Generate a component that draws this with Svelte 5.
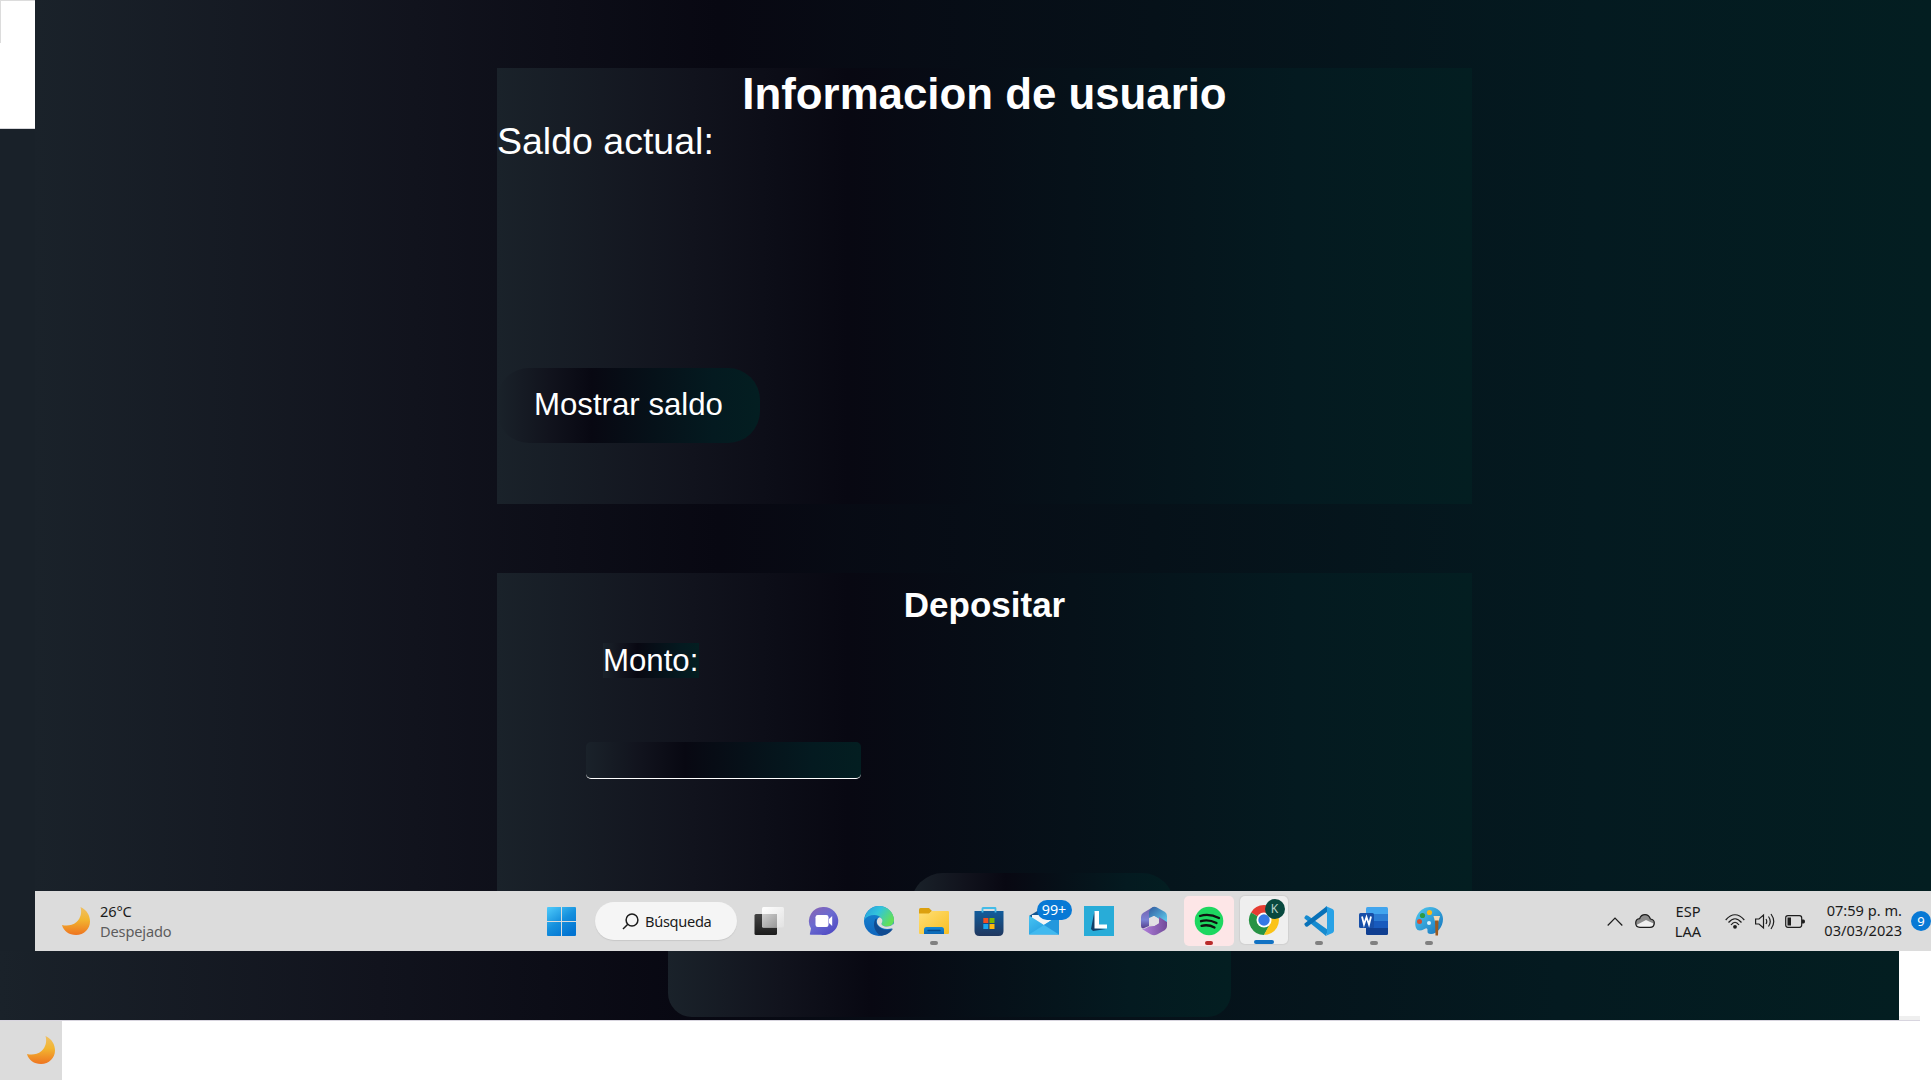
<script>
  const apps = [
    { id: 'tasks' },
    { id: 'chat' },
    { id: 'edge' },
    { id: 'files', dot: 'idle' },
    { id: 'store' },
    { id: 'mail', badge: '99+' },
    { id: 'lens' },
    { id: 'office' },
    { id: 'spotify', dot: 'alert', tile: 'pink' },
    { id: 'chrome', dot: 'active', tile: 'light' },
    { id: 'code', dot: 'idle' },
    { id: 'word', dot: 'idle' },
    { id: 'paint', dot: 'idle' }
  ];
</script>

{#snippet moon()}
  <svg class="moon" viewBox="0 0 28 28">
    <defs>
      <linearGradient id="moonFill" x1="0" y1="0" x2="0" y2="1">
        <stop offset="0" stop-color="#efc064" />
        <stop offset=".45" stop-color="#f2b530" />
        <stop offset="1" stop-color="#ee7420" />
      </linearGradient>
    </defs>
    <path d="M18.5 0C25 3 28 8.500 28 14.500C28 22 22 28 14 28C7 28 1.500 24 0 18C4 19 10 19 14.500 15C19 11 20 5 18.500 0Z" fill="url(#moonFill)" />
  </svg>
{/snippet}

{#snippet icon(id)}
  <svg class="icon" viewBox="0 0 30 30">
    {#if id === 'tasks'}
      <defs>
        <linearGradient id="tkA" x1="0" y1="0" x2="0" y2="1"><stop stop-color="#444" /><stop offset="1" stop-color="#1c1c1c" /></linearGradient>
        <linearGradient id="tkB" x1="0" y1="0" x2="1" y2="1"><stop stop-color="#fff" /><stop offset="1" stop-color="#e2e2e2" /></linearGradient>
        <linearGradient id="tkC" x1="0" y1="0" x2="1" y2="1"><stop stop-color="#cfcfcf" /><stop offset="1" stop-color="#999" /></linearGradient>
      </defs>
      <rect x=".5" y="8" width="22.500" height="21" rx="1.500" fill="url(#tkA)" />
      <rect x="8" y="1" width="22" height="20.500" rx="1.500" fill="url(#tkB)" />
      <path d="M8 8h15v13.500H9.500Q8 21.500 8 20z" fill="url(#tkC)" />
    {:else if id === 'chat'}
      <defs>
        <linearGradient id="chA" x1="0" y1="0" x2=".7" y2="1"><stop stop-color="#8b62b0" /><stop offset=".5" stop-color="#6b6bd0" /><stop offset="1" stop-color="#514cc4" /></linearGradient>
      </defs>
      <path d="M15 1a14.300 14 0 1 1-3 27.700H1.500Q.3 28.700 1 27.300L2 22.500A14.200 14.200 0 0 1 15 1Z" fill="url(#chA)" />
      <rect x="6.500" y="9" width="13" height="12" rx="2.200" fill="#fff" />
      <path d="M20 13L23.200 10V20L20 17Z" fill="#fff" />
    {:else if id === 'edge'}
      <defs>
        <linearGradient id="edA" x1="0" y1="0" x2="1" y2=".5"><stop stop-color="#2699dc" /><stop offset=".5" stop-color="#32c4dc" /><stop offset="1" stop-color="#62df5a" /></linearGradient>
        <linearGradient id="edB" x1="0" y1="0" x2="0" y2="1"><stop stop-color="#1688d2" /><stop offset="1" stop-color="#0f65bd" /></linearGradient>
      </defs>
      <circle cx="15" cy="15" r="15" fill="url(#edB)" />
      <path d="M1 11C3 4 8.500 0 15 0C23.500 0 30 6.500 30 14C30 18 27 20.500 23 20.500C19 20.500 16.500 18.500 18 16.500C19 13 16 9 10.500 9C6 9 2.500 10.500 0 14Q0 12.500 1 11Z" fill="url(#edA)" />
      <path d="M11.500 13C8 19 11 27 17 29.800C22 29.500 27 26.500 29 22.500C23 25.500 16 23.500 13.500 19C12 16.500 12 14.500 13 12.500Z" fill="#104b91" />
      <path d="M18 16.500C16.500 18.500 19 20.500 23 20.500C26 20.500 28 19.500 29.500 17.500L31 22L28.500 22.300C23 24 17 23 14 19C11.500 15.500 13.500 11.500 16 11.200C18 12 19 14.500 18 16.500Z" fill="#dcdcdc" />
    {:else if id === 'files'}
      <defs>
        <linearGradient id="fiA" x1="0" y1="0" x2="1" y2="1"><stop stop-color="#ffdf76" /><stop offset="1" stop-color="#f8bf23" /></linearGradient>
        <linearGradient id="fiB" x1="0" y1="0" x2="0" y2="1"><stop stop-color="#1489d4" /><stop offset="1" stop-color="#0c66b4" /></linearGradient>
      </defs>
      <path d="M0 3.500Q0 2 1.500 2H10L13 5L10 8H0Z" fill="#dca00e" />
      <path d="M0 7.500H10L13 5H29Q30 5 30 6V27Q30 28 29 28H1Q0 28 0 27Z" fill="url(#fiA)" />
      <path d="M5 28V23.500Q5 21 7.500 21H22.500Q25 21 25 23.500V28Z" fill="url(#fiB)" />
      <path d="M9 24.500H21" stroke="#064a8a" stroke-width="1.300" stroke-linecap="round" />
    {:else if id === 'store'}
      <defs>
        <linearGradient id="stA" x1="0" y1="0" x2="0" y2="1"><stop stop-color="#125d9c" /><stop offset="1" stop-color="#20375f" /></linearGradient>
      </defs>
      <path d="M.5 5H29.500V25Q29.500 30 24.500 30H5.500Q.5 30 .5 25Z" fill="url(#stA)" />
      <path d="M8.500 6.500V2.500Q8.500 2 9 2H21Q21.500 2 21.500 2.500V6.500" fill="none" stroke="#43bce8" stroke-width="1.800" />
      <path d="M9.300 12h5v5h-5z" fill="#f25022" /><path d="M15.500 12h5v5h-5z" fill="#7fba00" />
      <path d="M9.300 18h5v5h-5z" fill="#19a5ed" /><path d="M15.500 18h5v5h-5z" fill="#ffba10" />
    {:else if id === 'mail'}
      <defs>
        <linearGradient id="maA" x1="0" y1="0" x2="1" y2="1"><stop stop-color="#48c4f3" /><stop offset="1" stop-color="#168fd8" /></linearGradient>
      </defs>
      <path d="M0 10L10 4H30V14H0Z" fill="#135793" />
      <path d="M3 9H28V15L15 22L3 14Z" fill="#f5f5f5" />
      <path d="M0 9.500L15 19L30 9.500V28.500H0Z" fill="url(#maA)" />
      <path d="M0 28.500L30 9.500V28.500Z" fill="#41b9ef" /><path d="M15 19L30 28.500V9.500Z" fill="#2498dd" />
    {:else if id === 'lens'}
      <rect width="30" height="30" fill="#28acd8" />
      <path d="M10.500 5L7 23L9 25L22 23L12 22Z" fill="#103f68" />
      <path d="M10.500 5H15V18.500H23V22.500H10.500Z" fill="#fff" />
    {:else if id === 'office'}
      <defs>
        <linearGradient id="ofA" x1="0" y1="0" x2="0" y2="1"><stop stop-color="#775ea8" /><stop offset=".6" stop-color="#7a83d5" /><stop offset="1" stop-color="#553e8b" /></linearGradient>
        <linearGradient id="ofB" x1="0" y1="0" x2="1" y2="1"><stop stop-color="#315b9f" /><stop offset="1" stop-color="#62d3f2" /></linearGradient>
        <linearGradient id="ofC" x1="0" y1="0" x2="1" y2="0"><stop stop-color="#b280dc" /><stop offset="1" stop-color="#714b99" /></linearGradient>
      </defs>
      <path d="M14 1L4 7Q2 8.500 2 11V20Q2 22 4 22.500L10 20V11L18 5.500V2Q16 .5 14 1Z" fill="url(#ofA)" />
      <path d="M14 1Q16 .5 18 1.500L26 6Q28 7.500 28 10V17L20 13L15 10L10 12V7Q10 3 14 1Z" fill="url(#ofB)" />
      <path d="M20 11L28 16V20Q28 22.500 26 24L18 28.500Q15 30 12 28.500L3 23Q6 23 10 20.500L15 20L20 17Z" fill="url(#ofC)" />
      <path d="M10.500 12.500L15 10L19.500 12.500V17.500L15 20L10.500 17.500Z" fill="#e2e1e4" />
    {:else if id === 'spotify'}
      <circle cx="15" cy="15" r="14.300" fill="#1ed760" />
      <path d="M6 10C12 8 19 9 25 12M7 15.200C12 13.700 17.500 14.500 22.500 17M7.500 19.800C12 18.700 16.500 19.200 20.500 21.500" fill="none" stroke="#101010" stroke-width="2.300" stroke-linecap="round" />
    {:else if id === 'chrome'}
      <path d="M15 15L2 7.500A15 15 0 0 1 28 7.500Z" fill="#e63d32" />
      <path d="M15 15L2 7.500A15 15 0 0 0 15 30L21.500 18.800Z" fill="#279344" />
      <path d="M15 8H28.200A15 15 0 0 1 15 30L21 18.500Z" fill="#fbc317" />
      <circle cx="15" cy="15" r="7.500" fill="#fff" /><circle cx="15" cy="15" r="5.700" fill="#3578e5" />
    {:else if id === 'code'}
      <path d="M1 10.500Q2 8.500 4 9.800L24 24L22 30L.5 12.500Q0 11.500 1 10.500Z" fill="#168bd0" />
      <path d="M1 19.500Q2 21.500 4 20.200L23 6V0L.5 17.500Q0 18.500 1 19.500Z" fill="#0871b8" />
      <path d="M21.500 0L28.500 3Q30 3.700 30 5.500V24.500Q30 26.300 28.500 27L21.500 30Q23 29 23 27V3Q23 1 21.500 0Z" fill="#29a2e6" />
    {:else if id === 'word'}
      <path d="M7 2.500Q7 1 8.500 1H27.500Q29 1 29 2.500V8H7Z" fill="#41a5ee" /><path d="M7 8h22v7H7z" fill="#2b7cd3" />
      <path d="M7 15h22v7H7z" fill="#185abd" /><path d="M7 22H29V27.500Q29 29 27.500 29H8.500Q7 29 7 27.500Z" fill="#103f91" />
      <rect y="7" width="15" height="15" rx="1.500" fill="#174fa8" />
      <path d="M3 10.500L5 18.500L7.500 11L10 18.500L12 10.500" fill="none" stroke="#fff" stroke-width="1.800" />
    {:else if id === 'paint'}
      <defs>
        <linearGradient id="paA" x1="0" y1="0" x2="1" y2="1"><stop stop-color="#52cbf1" /><stop offset="1" stop-color="#1473bd" /></linearGradient>
      </defs>
      <path d="M16 1C24 1 29 7 29 13C29 21 23 28 17 28Q13 28 13.500 25Q14 21 10.500 23Q4 26.500 2 22C-1 12 6 1 16 1Z" fill="url(#paA)" />
      <circle cx="15.500" cy="6.500" r="2.600" fill="#f6b91e" /><circle cx="8.500" cy="9.500" r="2.600" fill="#2d9b45" />
      <circle cx="5.500" cy="15.500" r="2.500" fill="#d35032" /><circle cx="15" cy="17" r="2" fill="#d9f1fb" />
      <path d="M19.500 10H26L24.500 15.500H21Z" fill="#f3d9b5" /><path d="M21 14.500h3.500L24 29.500H21.500z" fill="#9c5a20" />
    {/if}
  </svg>
{/snippet}

<div class="desktop">
  <div class="upper">
    <div class="edge">
      <div class="blank"></div>
    </div>
    <main class="page">
      <section class="card info">
        <h1>Informacion de usuario</h1>
        <p class="balance">Saldo actual:</p>
        <button class="pill">Mostrar saldo</button>
      </section>
      <section class="card deposit">
        <h2>Depositar</h2>
        <label for="amount">Monto:</label>
        <input id="amount" type="text" />
        <div class="pill submit"></div>
      </section>
    </main>
  </div>

  <div class="barrow">
    <div class="gutter"></div>
    <footer class="taskbar">
      <div class="weather">
        {@render moon()}
        <div class="lines"><span>26°C</span><span class="muted">Despejado</span></div>
      </div>
      <svg class="start" viewBox="0 0 29 29">
        <defs>
          <linearGradient id="winFill" gradientUnits="userSpaceOnUse" x1="0" y1="0" x2="20" y2="29"><stop stop-color="#4fcbfb" /><stop offset=".55" stop-color="#1590dd" /><stop offset="1" stop-color="#0274d2" /></linearGradient>
        </defs>
        <path d="M1 0H14V14H0V1Q0 0 1 0ZM15 0H28Q29 0 29 1V14H15ZM0 15H14V29H1Q0 29 0 28ZM15 15H29V28Q29 29 28 29H15Z" fill="url(#winFill)" />
      </svg>
      <div class="search">
        <svg viewBox="0 0 17 17"><circle cx="10" cy="7" r="5.900" /><path d="M5.800 11.200L1 16" /></svg>
        <span>Búsqueda</span>
      </div>
      <nav class="apps">
        {#each apps as app}
          <div class="app">
            <div class="tile {app.tile ?? ''}">
              {@render icon(app.id)}
              {#if app.badge}<span class="badge">{app.badge}</span>{/if}
              {#if app.id === 'chrome'}<span class="profile">K</span>{/if}
              {#if app.dot}<i class="dot {app.dot}"></i>{/if}
            </div>
          </div>
        {/each}
      </nav>
      <div class="tray">
        <svg class="chev" viewBox="0 0 16 9"><path d="M.7 8.500L8 1L15.300 8.500" /></svg>
        <svg class="cloud" viewBox="0 0 20 14">
          <path d="M5 13.300Q.7 13.300 .7 9Q.7 5 4.600 4.700Q6 .7 10 .7Q14 .7 15.400 5Q19.300 5.500 19.300 9Q19.300 13.300 15 13.300Z" fill="#8c8c8c" stroke="none" />
          <path d="M1.500 11L11 6L18.500 9.500Q18.500 13 15 13H5Q2.500 13 1.500 11Z" fill="#f0f0f0" stroke="none" />
          <path d="M5 13.300Q.7 13.300 .7 9Q.7 5 4.600 4.700Q6 .7 10 .7Q14 .7 15.400 5Q19.300 5.500 19.300 9Q19.300 13.300 15 13.300Z" />
        </svg>
        <div class="lang"><span>ESP</span><span>LAA</span></div>
        <svg class="wifi" viewBox="0 0 20 15">
          <path d="M.7 6Q10-4.500 19.300 6M3.500 8.500Q10 1 16.500 8.500M6 11Q10 5.500 14 11" /><circle cx="10" cy="12.800" r="1.900" fill="#1d1d1d" stroke="none" />
        </svg>
        <svg class="sound" viewBox="0 0 20 17">
          <path d="M.6 6H4L8.500 2V15L4 11H.6ZM11 6Q12.500 8.500 11 11M13.500 3.500Q17 8.500 13.500 13.500M16 1Q21.500 8.500 16 16" />
        </svg>
        <svg class="battery" viewBox="0 0 20 13">
          <rect x=".7" y=".7" width="16" height="11.600" rx="2.200" /><path d="M2.500 2.500H6V10.500H2.500Z" fill="#1d1d1d" stroke="none" /><path d="M17 4.500H18.500Q20 4.500 20 6.500T18.500 8.500H17Z" fill="#1d1d1d" stroke="none" />
        </svg>
        <div class="clock"><span>07:59 p. m.</span><span>03/03/2023</span></div>
        <span class="count">9</span>
      </div>
    </footer>
  </div>

  <div class="strip">
    <div class="stripbg"><div class="tail"></div></div>
    <div class="corner"></div>
  </div>
  <div class="bottom">
    <div class="fragment">{@render moon()}</div>
  </div>
</div>

<style>
  :global(body) { margin: 0; background: #fff; overflow: hidden; }
  .desktop {
    --shade: linear-gradient(to right, #1a222a 0%, #11131d 20%, #080812 36%, #041a20 82%, #031e21 100%);
    width: 1931px;
    height: 1088px;
    overflow: hidden;
    font-family: "Liberation Sans", Arial, sans-serif;
    color: #fff;
  }
  .upper { display: flex; height: 891px; overflow: hidden; }
  .edge { width: 35px; flex: none; background: #192129; }
  .blank {
    box-sizing: border-box;
    height: 129px;
    background: #fff;
    border-top: 1px solid #dcdcdc;
    border-bottom: 1px solid #d6d6da;
  }
  .blank::before { content: ""; display: block; width: 1px; height: 42px; background: #dcdcdc; }
  .page {
    box-sizing: border-box;
    flex: 1;
    padding: 68px 459px 0 462px;
    background: var(--shade);
  }
  .card { background: var(--shade); width: 975px; box-sizing: border-box; }
  .info { height: 436px; margin-bottom: 69px; }
  .deposit { height: 447px; }
  h1 { margin: 0; text-align: center; font-size: 43.800px; line-height: 52px; }
  .balance { margin: 0; font-size: 37.500px; line-height: 43px; }
  .pill {
    display: block;
    width: 263px;
    height: 75px;
    margin: 205px 0 0;
    padding: 0 0 2px;
    border: 0;
    border-radius: 32px;
    background: var(--shade);
    color: #fff;
    font: 31.200px "Liberation Sans", Arial, sans-serif;
  }
  h2 { margin: 0; padding-top: 11px; text-align: center; font-size: 35px; line-height: 42px; }
  label {
    display: block;
    width: 96px;
    margin: 17px 0 0 106px;
    background: var(--shade);
    font-size: 31.200px;
    line-height: 35px;
    white-space: nowrap;
  }
  input {
    display: block;
    box-sizing: border-box;
    width: 275px;
    height: 37px;
    margin: 64px 0 0 89px;
    padding: 0;
    border: 0;
    border-bottom: 1px solid #fff;
    border-radius: 5px;
    background: var(--shade);
  }
  .submit { margin: 94px 0 0 414px; }

  .barrow { display: flex; height: 60px; }
  .gutter { width: 35px; flex: none; background: #192129; }
  .taskbar {
    flex: 1;
    display: flex;
    align-items: center;
    background: #dcdcdc;
    color: #1b1b1b;
    font: 14.600px/20px "Noto Sans", "Open Sans", sans-serif;
    white-space: nowrap;
  }
  .taskbar svg { flex: none; }
  .weather { display: flex; align-items: center; width: 485px; padding-left: 27px; }
  .moon { width: 28px; height: 28px; display: block; }
  .lines { display: flex; flex-direction: column; margin-left: 10px; letter-spacing: -.15px; }
  .muted { color: #5c5c5c; }
  .start { width: 29px; height: 29px; margin-right: 19px; }
  .search {
    box-sizing: border-box;
    display: flex;
    align-items: center;
    width: 142px;
    height: 38px;
    margin-right: 4px;
    padding-left: 27px;
    border-radius: 19px;
    background: #f5f5f5;
    box-shadow: 0 1px 1px #c8c8c8;
    letter-spacing: -.3px;
  }
  .search svg { width: 17px; height: 17px; fill: none; stroke: #1b1b1b; stroke-width: 1.500; margin-right: 6px; }
  .apps { display: flex; }
  .app { width: 55px; display: flex; justify-content: center; }
  .tile {
    position: relative;
    width: 50px;
    height: 50px;
    display: flex;
    align-items: center;
    justify-content: center;
    border-radius: 5px;
  }
  .pink { background: #fde6e7; }
  .light { width: 48px; height: 48px; background: #efefef; box-shadow: 0 0 1px 1px #d0d0d0; }
  .icon { width: 30px; height: 30px; overflow: visible; }
  .dot { position: absolute; bottom: 1px; width: 8px; height: 4px; border-radius: 2px; background: #808080; }
  .alert { background: #b92b2b; }
  .active { bottom: 0; width: 20px; background: #1272c3; }
  .badge {
    position: absolute;
    left: 18px;
    top: 4px;
    width: 35px;
    height: 20px;
    border-radius: 10px;
    background: #0879d5;
    color: #fff;
    font-size: 14.300px;
    text-align: center;
  }
  .profile {
    position: absolute;
    left: 25px;
    top: 3px;
    width: 20px;
    height: 20px;
    border-radius: 50%;
    background: #08493f;
    color: #b9d3cc;
    font-size: 12px;
    text-align: center;
  }
  .tray { display: flex; align-items: center; margin-left: 151px; }
  .tray svg { fill: none; stroke: #1d1d1d; stroke-width: 1.200; }
  .chev { width: 16px; height: 9px; }
  .cloud { width: 20px; height: 14px; margin-left: 12px; }
  .lang { display: flex; flex-direction: column; width: 40px; margin-left: 13px; text-align: center; }
  .wifi { width: 20px; height: 15px; margin-left: 17px; }
  .sound { width: 20px; height: 17px; margin-left: 10px; }
  .battery { width: 20px; height: 13px; margin-left: 10px; }
  .clock { display: flex; flex-direction: column; width: 97px; text-align: right; margin-top: -2px; }
  .count {
    width: 20px;
    height: 20px;
    margin-left: 9px;
    border-radius: 50%;
    background: #0879d5;
    color: #fff;
    font-size: 13px;
    text-align: center;
  }

  .strip { display: flex; height: 69px; }
  .stripbg { width: 1899px; background: var(--shade); }
  .tail {
    width: 563px;
    height: 66px;
    margin-left: 668px;
    border-radius: 0 0 24px 24px;
    background: var(--shade);
  }
  .corner { width: 21px; margin-top: 65px; background: #efefef; }
  .bottom { display: flex; height: 68px; width: 1920px; border-top: 1px solid #d8d5df; box-sizing: border-box; }
  .fragment { width: 62px; height: 59px; background: #dcdcdc; }
  .fragment .moon { margin: 15px 0 0 27px; }
</style>
